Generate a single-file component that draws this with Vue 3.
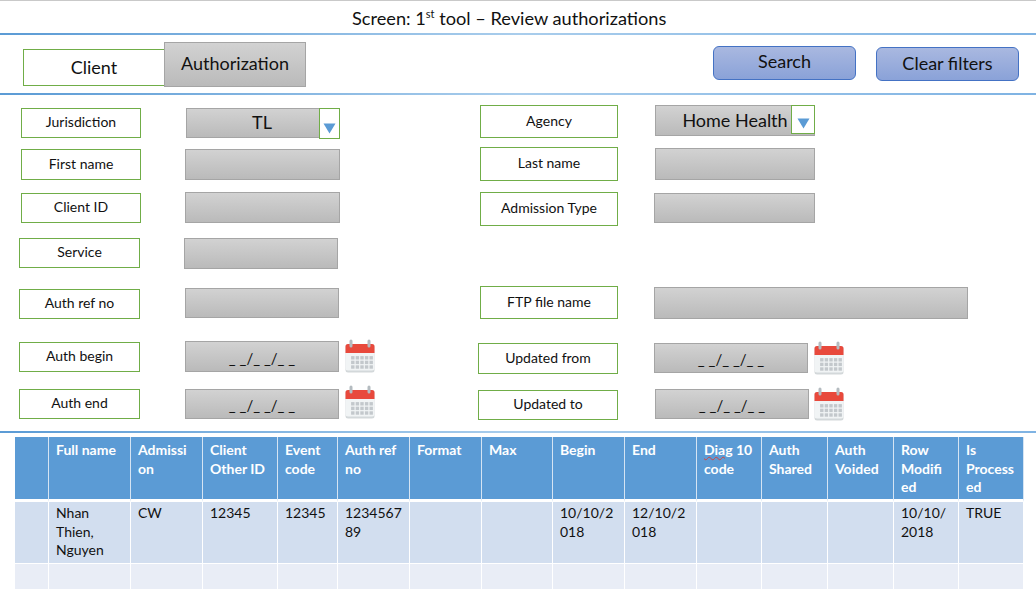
<template>
  <div class="screen">
    <div class="title">Screen: 1<sup>st</sup> tool – Review authorizations</div>
    <div class="rule"></div>

    <!-- tabs and actions -->
    <div class="toolbar">
      <div class="tabs">
        <div class="tab">Client</div>
        <div class="tab tab--active">Authorization</div>
      </div>
      <div class="actions">
        <button class="btn btn--search">Search</button>
        <button class="btn btn--clear">Clear filters</button>
      </div>
    </div>
    <div class="rule"></div>

    <!-- filters -->
    <div class="filters">
      <div v-for="(col, i) in columns" :key="i" class="filters__col" :class="{ 'filters__col--left': i === 0 }">
        <div v-for="f in col" :key="f.label" class="field" :style="{ marginTop: f.mt + 'px' }">
          <div
            class="field__label"
            :style="{ marginLeft: f.lx + 'px', marginTop: (f.ly || 0) + 'px', width: f.lw + 'px', height: f.lh + 'px' }"
          >{{ f.label }}</div>
          <div
            class="field__input"
            :class="{ 'field__input--large': f.value, 'field__input--date': f.date }"
            :style="{ marginLeft: (f.ix - f.lx - f.lw) + 'px', marginTop: (f.iy || 0) + 'px', width: f.iw + 'px', height: f.ih + 'px' }"
          >
            <span v-if="f.value" :style="{ marginLeft: (f.vx || 0) + 'px' }">{{ f.value }}</span>
            <span v-if="f.date">_ _/_ _/_ _</span>
            <div v-if="f.drop" class="drop" :class="'drop--' + f.drop">
              <svg width="13" height="11" viewBox="0 0 13 11"><path d="M0.5 0.5H12.5L6.5 10.5Z" fill="#5b9bd5" /></svg>
            </div>
          </div>
          <svg v-if="f.date" class="cal" :style="{ left: f.cx + 'px', top: f.cy + 'px' }" width="30" height="34" viewBox="0 0 30 34">
            <rect x="0.5" y="5" width="29" height="28.5" rx="2.5" fill="#d3d8da" />
            <rect x="0.5" y="5" width="29" height="26.5" rx="2.5" fill="#f1f4f5" />
            <path d="M0.5 14V7.5A2.5 2.5 0 0 1 3 5H27A2.5 2.5 0 0 1 29.5 7.5V14Z" fill="#e8493c" />
            <rect x="4.5" y="0.5" width="3" height="8" rx="1.5" fill="#b4bbc0" />
            <rect x="22.5" y="0.5" width="3" height="8" rx="1.5" fill="#b4bbc0" />
            <g fill="#c3c8cc">
              <template v-for="r in 3" :key="r">
                <rect v-for="c in 5" :key="c" :x="1.5 + c * 4.6" :y="12.5 + r * 4.6" width="3.4" height="3.4" />
              </template>
            </g>
          </svg>
        </div>
      </div>
    </div>
    <div class="rule"></div>

    <!-- results -->
    <table class="results">
      <colgroup>
        <col v-for="(w, i) in colWidths" :key="i" :style="{ width: w + 'px' }" />
      </colgroup>
      <thead>
        <tr>
          <th></th>
          <th v-for="h in headers" :key="h">
            <template v-if="h.startsWith('Diag')"><span class="squiggle">Diag</span> 10
code</template>
            <template v-else>{{ h }}</template>
          </th>
        </tr>
      </thead>
      <tbody>
        <tr class="row-main">
          <td></td>
          <td v-for="(c, i) in row" :key="i">{{ c }}</td>
        </tr>
        <tr class="row-empty">
          <td v-for="i in colWidths.length" :key="i"></td>
        </tr>
      </tbody>
    </table>
  </div>
</template>

<script setup>
const columns = [
  [
    { label: 'Jurisdiction', mt: 13, lx: 21, lw: 120, lh: 30, ix: 186, iw: 134, ih: 30, value: 'TL', vx: 18, drop: 'left' },
    { label: 'First name', mt: 11, lx: 21, lw: 120, lh: 31, ix: 185, iw: 155, ih: 31 },
    { label: 'Client ID', mt: 12, lx: 21, ly: 1, lw: 120, lh: 30, ix: 185, iw: 155, ih: 31 },
    { label: 'Service', mt: 15, lx: 19, lw: 121, lh: 30, ix: 184, iw: 154, ih: 31 },
    { label: 'Auth ref no', mt: 19, lx: 19, ly: 1, lw: 121, lh: 30, ix: 185, iw: 154, ih: 30 },
    { label: 'Auth begin', mt: 22, lx: 19, ly: 1, lw: 121, lh: 30, ix: 185, iw: 154, ih: 31, date: true, cx: 345, cy: -2 },
    { label: 'Auth end', mt: 17, lx: 19, lw: 121, lh: 30, ix: 185, iw: 154, ih: 30, date: true, cx: 345, cy: -4 }
  ],
  [
    { label: 'Agency', mt: 10, lx: 2, lw: 138, lh: 33, ix: 177, iw: 160, ih: 31, value: 'Home Health', drop: 'inner' },
    { label: 'Last name', mt: 9, lx: 2, lw: 138, lh: 34, ix: 177, iy: 1, iw: 160, ih: 32 },
    { label: 'Admission Type', mt: 11, lx: 2, lw: 138, lh: 34, ix: 176, iy: 1, iw: 161, ih: 30 },
    { label: 'FTP file name', mt: 60, lx: 2, lw: 138, lh: 33, ix: 176, iy: 1, iw: 314, ih: 32 },
    { label: 'Updated from', mt: 24, lx: 0, lw: 140, lh: 31, ix: 176, iw: 154, ih: 30, date: true, cx: 336, cy: -2 },
    { label: 'Updated to', mt: 15, lx: 0, ly: 1, lw: 140, lh: 30, ix: 177, iw: 154, ih: 30, date: true, cx: 336, cy: -2 }
  ]
]

const colWidths = [34, 82, 72, 75, 60, 72, 72, 71, 72, 72, 65, 66, 66, 65, 65]

const headers = [
  'Full name', 'Admissi\non', 'Client\nOther ID', 'Event\ncode', 'Auth ref\nno', 'Format', 'Max',
  'Begin', 'End', 'Diag 10\ncode', 'Auth\nShared', 'Auth\nVoided', 'Row\nModifi\ned', 'Is\nProcess\ned'
]

const row = [
  'Nhan\nThien,\nNguyen', 'CW', '12345', '12345', '1234567\n89', '', '',
  '10/10/2\n018', '12/10/2\n018', '', '', '', '10/10/\n2018', 'TRUE'
]
</script>

<style scoped>
.screen {
  width: 1036px;
  height: 593px;
  overflow: hidden;
  background: #fff;
  color: #111;
  font-family: Lato, "Liberation Sans", sans-serif;
}

.title {
  height: 33px;
  border-top: 1px solid #c9c9c9;
  box-sizing: border-box;
  padding-top: 5px;
  padding-left: 352px;
  font-size: 18.2px;
  line-height: 24px;
  white-space: pre;
}
.title sup {
  font-size: 11px;
  line-height: 0;
}

.rule {
  height: 2px;
  background: linear-gradient(90deg, #5b9bd5 0%, #a9cdec 50%, #7fb3e3 100%);
}

/* tabs and buttons */
.toolbar {
  height: 58px;
  display: flex;
  justify-content: space-between;
}
.tabs {
  display: flex;
  padding-left: 23px;
  padding-top: 7px;
}
.tab {
  width: 142px;
  height: 37px;
  margin-top: 7px;
  padding-bottom: 2px;
  box-sizing: border-box;
  border: 1.5px solid #70ad47;
  display: flex;
  align-items: center;
  justify-content: center;
  font-size: 18px;
}
.tab--active {
  height: 45px;
  margin-top: 0;
  margin-left: -1px;
  padding-bottom: 3px;
  border-color: #a5a5a5;
  background: linear-gradient(180deg, #d2d2d2, #bababa);
}
.actions {
  display: flex;
  gap: 20px;
  padding-right: 17px;
  padding-top: 11px;
}
.btn {
  width: 143px;
  height: 34px;
  box-sizing: border-box;
  border: 1.5px solid #4472c4;
  border-radius: 6px;
  background: linear-gradient(180deg, #a9b8e0, #8aa2d8);
  color: #111;
  font-family: inherit;
  font-size: 18px;
  padding: 0 0 2px;
}
.btn--search {
  padding-bottom: 4px;
}
.btn--clear {
  margin-top: 1px;
}

/* filters */
.filters {
  height: 336px;
  display: flex;
}
.filters__col {
  flex: 1;
}
.filters__col--left {
  flex: 0 0 478px;
}
.field {
  position: relative;
  display: flex;
  align-items: flex-start;
}
.field__label {
  flex-shrink: 0;
  box-sizing: border-box;
  padding-bottom: 3px;
  border: 1.5px solid #70ad47;
  display: flex;
  align-items: center;
  justify-content: center;
  font-size: 14px;
}
.field__input {
  position: relative;
  flex-shrink: 0;
  box-sizing: border-box;
  border: 1.5px solid #a5a5a5;
  background: linear-gradient(180deg, #d2d2d2, #bababa);
  display: flex;
  align-items: center;
  justify-content: center;
}
.field__input--large {
  font-size: 18px;
  padding-bottom: 2px;
}
.field__input--date {
  font-size: 15px;
  padding-top: 2px;
}
.drop {
  position: absolute;
  box-sizing: border-box;
  background: #fff;
  border: 1.5px solid #70ad47;
  display: flex;
  justify-content: center;
  align-items: flex-end;
  padding-bottom: 4px;
}
.drop--left {
  width: 21px;
  height: 31px;
  left: 132px;
  top: -1.5px;
}
.drop--inner {
  width: 24px;
  height: 29px;
  left: 135px;
  top: -1.5px;
}
.cal {
  position: absolute;
}

/* table */
.results {
  table-layout: fixed;
  width: 1009px;
  margin: 4px 0 0 15px;
  border-collapse: separate;
  border-spacing: 0;
  font-size: 14px;
  line-height: 18.7px;
}
.results th,
.results td {
  padding: 4px 0 0 7px;
  box-sizing: border-box;
  vertical-align: top;
  text-align: left;
  white-space: pre-line;
  border-right: 1px solid #fff;
}
.results th {
  height: 65px;
  background: #5b9bd5;
  color: #fff;
  font-weight: 700;
  border-right-color: #d5e4f3;
  border-bottom: 3px solid #fff;
}
.row-main td {
  height: 62px;
  padding-top: 2px;
  background: #d2deef;
  border-bottom: 1px solid #fff;
}
.row-empty td {
  height: 25px;
  background: #e9edf6;
}
.squiggle {
  text-decoration: underline wavy #d8413a 1px;
}
</style>

<style>
html, body {
  margin: 0;
  background: #fff;
}
</style>
